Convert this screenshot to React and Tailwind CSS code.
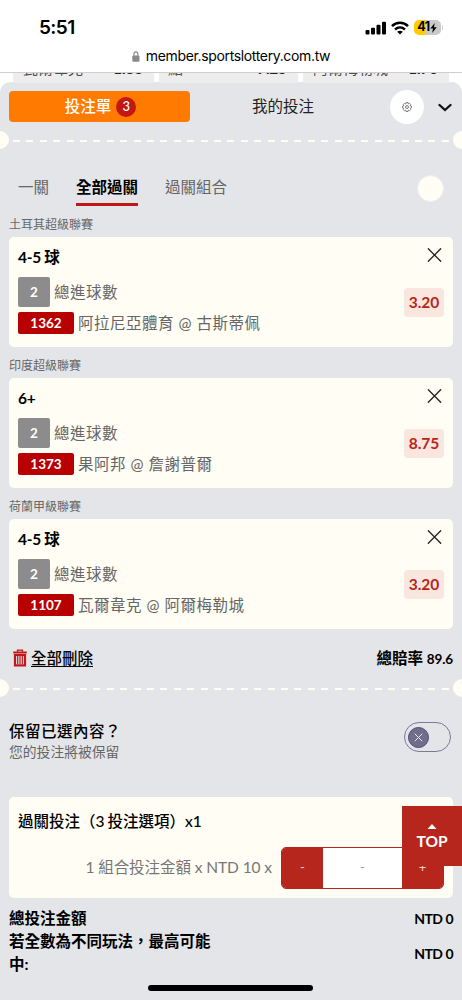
import React from "react";

const bets = [
  {
    league: "土耳其超級聯賽",
    pick: "4-5 球",
    code: "1362",
    match: "阿拉尼亞體育 @ 古斯蒂佩",
    odds: "3.20",
  },
  {
    league: "印度超級聯賽",
    pick: "6+",
    code: "1373",
    match: "果阿邦 @ 詹謝普爾",
    odds: "8.75",
  },
  {
    league: "荷蘭甲級聯賽",
    pick: "4-5 球",
    code: "1107",
    match: "瓦爾韋克 @ 阿爾梅勒城",
    odds: "3.20",
  },
];

const StatusBar = () => (
  <div className="h-[72px] bg-white font-['Inter',sans-serif] text-black">
    <div className="flex h-[45px] items-start justify-between pl-[39px] pr-[19px]">
      <span className="mt-[15px] text-[19px] font-semibold leading-[26px] tracking-[-0.6px]">
        5:51
      </span>
      <div className="mt-[15px] flex h-[25px] items-center">
        <svg className="h-[14px] w-[22px]" viewBox="0 0 22 14">
          <rect x="0.5" y="9" width="4" height="4.5" rx="1" />
          <rect x="6" y="6.8" width="4" height="6.7" rx="1" />
          <rect x="11.5" y="3.7" width="4" height="9.8" rx="1" />
          <rect x="17" y="0.7" width="4" height="12.8" rx="1" />
        </svg>
        <svg className="ml-[4px] h-[14px] w-[18px]" viewBox="0 0 18 14">
          <g fill="none" stroke="#000" strokeWidth="2.5">
            <path d="M1 5.2C5.5 0.7 12.5 0.7 17 5.2" />
            <path d="M4 8.5C7 5.8 11 5.8 14 8.5" />
          </g>
          <path d="M9 13.6L6.2 10.8C7.8 9.4 10.2 9.4 11.8 10.8Z" />
        </svg>
        <div className="ml-[5px] flex h-[15px] w-[27px] items-center justify-center rounded-[5px] bg-[linear-gradient(90deg,#ffcc00_42%,#c9c9cb_42%)] text-[12.5px] font-bold leading-none tracking-[-0.4px]">
          41
          <svg className="h-[10px] w-[7px]" viewBox="0 0 7 10">
            <path d="M4.7 0L0.3 5.6H3L2.2 10L6.7 4.2H4Z" />
          </svg>
        </div>
        <span className="ml-[1px] h-[5px] w-[1.5px] rounded-r bg-[#d0d0d2]" />
      </div>
    </div>
    <div className="flex h-[22px] items-center justify-center">
      <svg className="h-[11px] w-[8px]" viewBox="0 0 8 11" fill="#8a8a8e">
        <rect x="0.3" y="4.5" width="7.2" height="6.2" rx="1.2" />
        <path
          d="M1.9 5V3A2 2.1 0 0 1 5.9 3V5"
          fill="none"
          stroke="#8a8a8e"
          strokeWidth="1.1"
        />
      </svg>
      <span className="ml-[6px] text-[14px] leading-[20px] tracking-[-0.35px]">
        member.sportslottery.com.tw
      </span>
    </div>
  </div>
);

const OddsCell = ({ name, value, className }) => (
  <div
    className={`flex h-[10px] shrink-0 justify-between overflow-hidden bg-[#ededee] text-[15px] leading-[22px] text-[#4d4d4f] ${className}`}
  >
    <span className="-mt-[16px]">{name}</span>
    <span className="-mt-[16px] font-black text-[#222]">{value}</span>
  </div>
);

const Divider = () => (
  <div className="flex h-[18px] items-center justify-between overflow-hidden">
    <span className="h-[18px] w-[9px] rounded-r-full bg-[#fffdf4]" />
    <span className="mt-[2px] h-[2px] w-[436px] bg-[repeating-linear-gradient(90deg,#fffdf4_0_7px,transparent_7px_13.4px)]" />
    <span className="h-[18px] w-[9px] rounded-l-full bg-[#fffdf4]" />
  </div>
);

const BetCard = ({ bet }) => (
  <div className="h-[141px] px-[9px]">
    <div className="h-[22px] pt-[1px] text-[12px] leading-[18px] text-[#666]">
      {bet.league}
    </div>
    <div className="flex h-[110px] justify-between rounded-[5px] bg-[#fffdf4] px-[9px]">
      <div className="pt-[9px]">
        <div className="h-[31px] text-[15.5px] font-bold leading-[22px] tracking-[-0.3px] text-black">
          {bet.pick}
        </div>
        <div className="flex items-center text-[15.5px] tracking-[0.5px] text-[#666]">
          <span className="mr-[4px] flex h-[30px] w-[32px] items-center justify-center rounded-[2px] bg-[#8c8c8c] text-[13.5px] font-bold tracking-[0px] text-white">
            2
          </span>
          <span className="pt-[2px]">總進球數</span>
        </div>
        <div className="mt-[5px] flex h-[22px] items-center text-[15.5px] tracking-[0.5px] text-[#666]">
          <span className="mr-[4px] flex h-[22px] w-[56px] items-center justify-center rounded-[2px] bg-[#b90000] text-[13.5px] font-bold tracking-[0px] text-white">
            {bet.code}
          </span>
          <span className="pt-[1px]">{bet.match}</span>
        </div>
      </div>
      <div className="flex flex-col items-end pt-[11px]">
        <svg
          className="mr-[2px] h-[14px] w-[15px]"
          viewBox="0 0 15 14"
          fill="none"
          stroke="#222"
          strokeWidth="1.3"
          strokeLinecap="round"
        >
          <path d="M1.3 0.7L13.7 13.3M13.7 0.7L1.3 13.3" />
        </svg>
        <span className="mt-[26px] flex h-[29px] w-[40px] items-center justify-center rounded-[4px] bg-[#f8e6df] text-[15.5px] font-bold text-[#b7261c]">
          {bet.odds}
        </span>
      </div>
    </div>
  </div>
);

const App = () => {
  return (
    <div className="relative h-[1000px] w-[462px] overflow-hidden bg-white font-['Lato','Noto_Sans_CJK_TC',sans-serif]">
      <StatusBar />

      {/* Odds list cut off behind the slip */}
      <div className="flex h-[20px] gap-[5px] border-t border-[#cfcfcf] bg-white pl-[13px]">
        <OddsCell name="瓦爾韋克" value="1.83" className="w-[141px] pl-[10px] pr-[11px]" />
        <OddsCell name="點" value="7.25" className="w-[139px] pl-[9px] pr-[11px]" />
        <OddsCell name="阿爾梅勒城" value="1.70" className="w-[146px] pl-[10px] pr-[11px]" />
      </div>

      {/* Bet slip panel */}
      <div className="-mt-[10px] h-[918px] rounded-t-[10px] bg-[#e4e5e8]">
        <div className="flex h-[49px] items-center pl-[9px]">
          <button className="flex h-[31px] w-[181px] items-center justify-center gap-[5px] rounded-[4px] bg-[#ff7a00] pl-[2px] text-[15.5px] font-medium text-white">
            投注單
            <span className="flex h-[20px] w-[20px] items-center justify-center rounded-full bg-[#c31812] text-[13px]">
              3
            </span>
          </button>
          <span className="ml-[62px] w-[138px] pt-[1px] text-[15.5px] text-[#222]">
            我的投注
          </span>
          <span className="flex h-[34px] w-[34px] items-center justify-center rounded-full bg-white">
            <svg
              className="h-[10px] w-[10px]"
              viewBox="0 0 24 24"
              fill="none"
              stroke="#666"
              strokeWidth="2"
              strokeLinejoin="round"
            >
              <path d="M9.5 1.5h5l.8 3 2.7-1.2 3 3L19.8 9l2.7.8v4.6l-2.7.8 1.2 2.7-3 3-2.7-1.2-.8 3h-5l-.8-3L6 20.9l-3-3 1.2-2.7-2.7-.8V9.800L4.2 9 3 6.300l3-3 2.7 1.2z" />
              <circle cx="12" cy="12" r="3.5" />
            </svg>
          </span>
          <svg
            className="ml-[14px] mt-[2px] h-[9px] w-[14px]"
            viewBox="0 0 14 9"
            fill="none"
            stroke="#111"
            strokeWidth="2.3"
            strokeLinecap="round"
          >
            <path d="M1.5 2L7 7L12.5 2" />
          </svg>
        </div>

        <Divider />

        <div className="flex h-[66px] items-start pl-[18px] pr-[18px] pt-[26px] text-[15.5px] leading-[24px] text-[#666]">
          <span className="w-[58px]">一關</span>
          <span className="mr-[27px] h-[31px] border-b-3 border-[#c01818] font-bold text-black">
            全部過關
          </span>
          <span>過關組合</span>
          <span className="ml-auto h-[27px] w-[27px] rounded-full border border-[#eeeeef] bg-[#fffdf4]" />
        </div>

        {bets.map((bet) => (
          <BetCard key={bet.code} bet={bet} />
        ))}

        <div className="flex h-[41px] items-start justify-between pl-[13px] pr-[9px] pt-[8px] text-[15.5px] leading-[24px] text-black">
          <span className="flex items-center">
            <svg className="mr-[4px] h-[18px] w-[14px]" viewBox="0 0 14 18">
              <g fill="none" stroke="#c01818">
                <path d="M4.5 2.7V1.2H9.5V2.7" strokeWidth="1.3" />
                <path d="M0.2 3.5H13.8" strokeWidth="2" />
                <path d="M2 6V16.3H12V6Z" strokeWidth="2.2" />
                <path d="M4.7 7V15M7 7V15M9.3 7V15" strokeWidth="1.2" />
              </g>
            </svg>
            <span className="font-medium underline underline-offset-[2px]">全部刪除</span>
          </span>
          <span className="font-bold">
            總賠率 <span className="text-[13.5px] tracking-[-0.1px]">89.6</span>
          </span>
        </div>

        <Divider />

        <div className="flex h-[100px] items-start justify-between pl-[9px] pr-[11px] pt-[22px]">
          <div>
            <div className="text-[15.5px] font-medium leading-[24px] tracking-[0.5px] text-black">
              保留已選內容？
            </div>
            <div className="text-[13.8px] leading-[18px] text-[#666]">
              您的投注將被保留
            </div>
          </div>
          <div className="mt-[3px] flex h-[30px] w-[47px] items-center rounded-full border border-[#7b789b] pl-[3px]">
            <span className="flex h-[21px] w-[21px] items-center justify-center rounded-full border border-[#4c496f] bg-[#706d8d]">
              <svg className="h-[9px] w-[9px]" viewBox="0 0 9 9" stroke="#e9e8f0">
                <path d="M0.8 0.8L8.2 8.2M8.2 0.8L0.8 8.2" />
              </svg>
            </span>
          </div>
        </div>

        <div className="mx-[9px] h-[101px] rounded-[5px] bg-[#fffdf4] px-[9px] pt-[12px]">
          <div className="h-[38px] text-[15.5px] font-medium leading-[24px] text-black">
            過關投注（3<span className="ml-[3px]">投注選項）x1</span>
          </div>
          <div className="flex items-center justify-end text-[15.5px] text-[#777]">
            <span className="mr-[9px] tracking-[-0.08px]">1 組合投注金額 x NTD 10 x</span>
            <div className="flex h-[42px] w-[163px] overflow-hidden rounded-[5px] border border-[#b7261c] text-[13px]">
              <button className="w-[41px] bg-[#b7261c] text-[#f3cfc8]">-</button>
              <span className="flex flex-1 items-center justify-center bg-white text-[#999]">
                -
              </span>
              <button className="w-[41px] bg-[#b7261c] text-[#f3cfc8]">+</button>
            </div>
          </div>
        </div>

        <div className="px-[9px] pt-[9px] text-[15.5px] font-bold leading-[23px] text-black">
          <div className="flex justify-between">
            <span>總投注金額</span>
            <span className="text-[14px] tracking-[-0.5px]">NTD 0</span>
          </div>
          <div className="flex items-center justify-between">
            <span className="w-[210px]">若全數為不同玩法，最高可能中:</span>
            <span className="text-[14px] tracking-[-0.5px]">NTD 0</span>
          </div>
        </div>
      </div>

      {/* Back to top */}
      <button className="absolute right-0 top-[806px] flex h-[60px] w-[60px] flex-col items-center bg-[#b7261c] pt-[18px] text-[15.5px] font-bold leading-[22px] text-white">
        <svg className="h-[5px] w-[10px]" viewBox="0 0 10 5" fill="#fff">
          <path d="M5 0L9.5 5H0.5Z" />
        </svg>
        <span className="mt-[1px]">TOP</span>
      </button>

      {/* Home indicator */}
      <div className="absolute bottom-[9px] left-[148px] h-[6px] w-[165px] rounded-full bg-black" />
    </div>
  );
};

export default App;
